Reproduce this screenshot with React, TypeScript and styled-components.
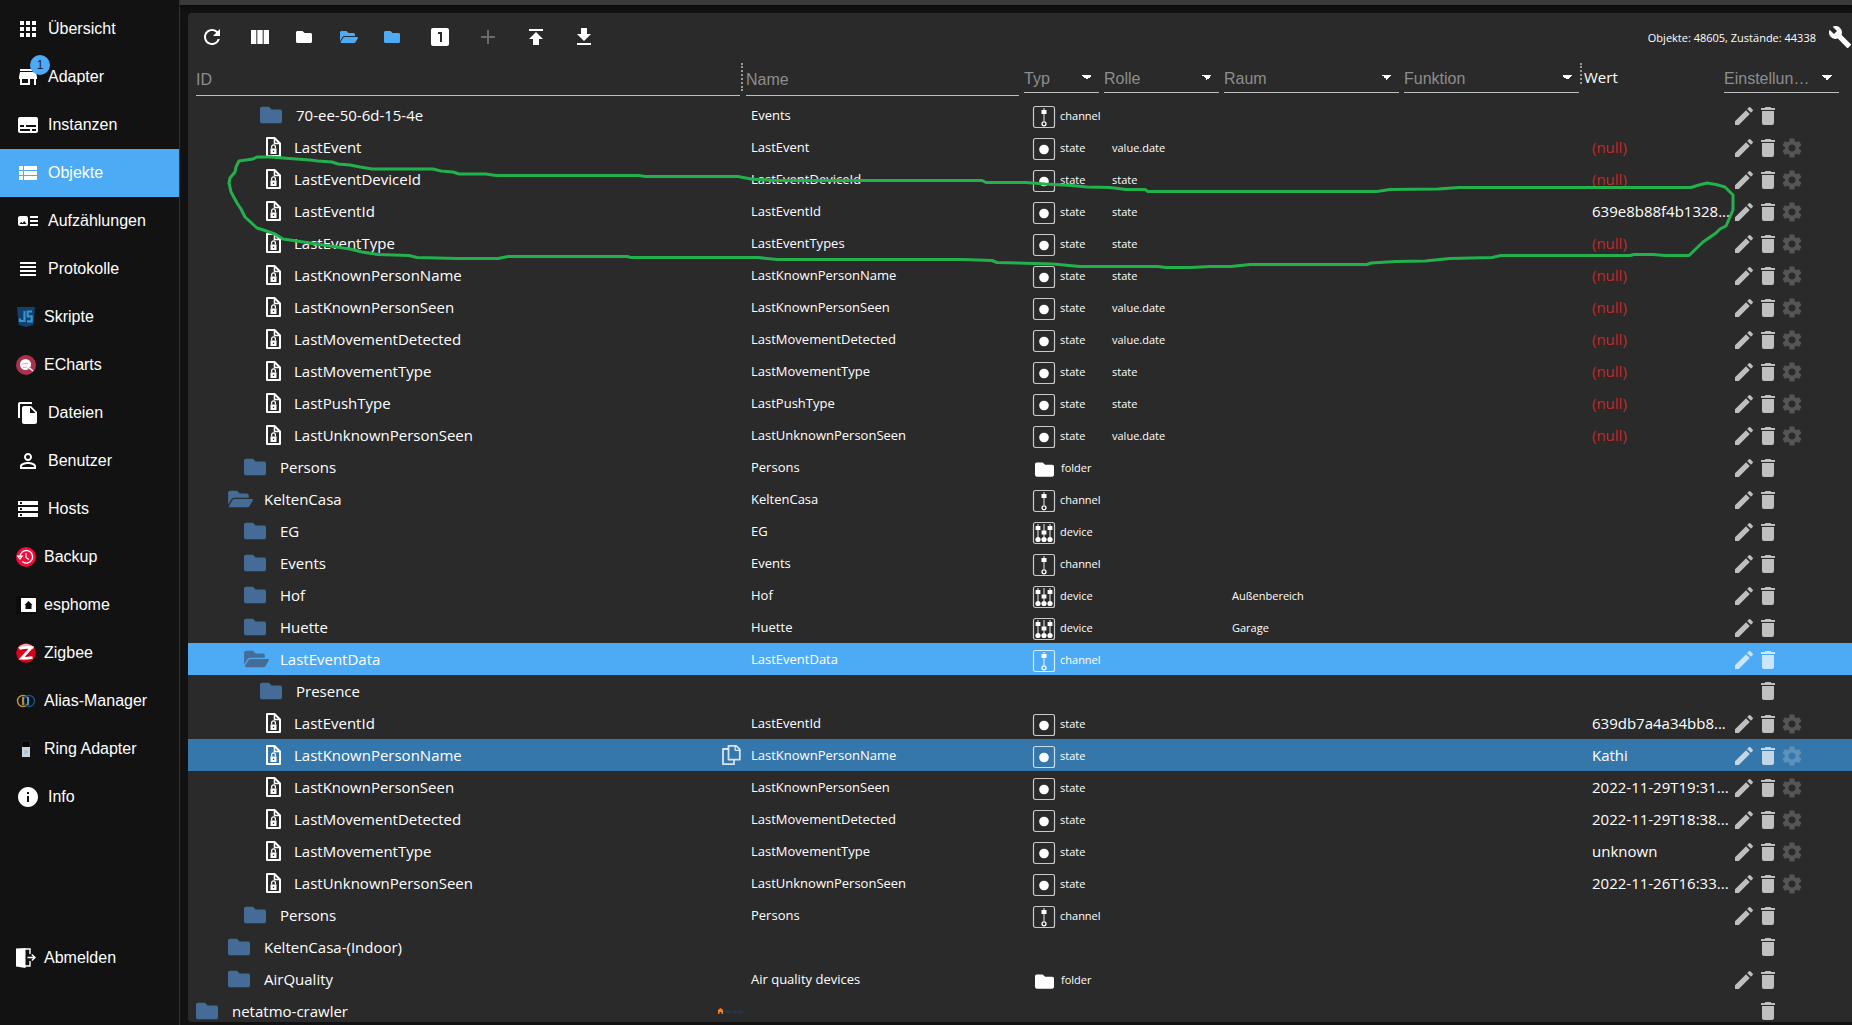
import React from "react";
import styled, { createGlobalStyle, css } from "styled-components";
import {
  MdApps, MdStore, MdSubtitles, MdViewList, MdArtTrack, MdViewHeadline, MdFileCopy,
  MdPersonOutline, MdStorage, MdInfo, MdRefresh, MdViewColumn, MdLooksOne, MdAdd,
  MdPublish, MdGetApp, MdBuild, MdEdit, MdDelete, MdSettings,
} from "react-icons/md";
import { FaFolder, FaFolderOpen } from "react-icons/fa";

const color = {
  page: "#121212",
  panel: "#2a2a2a",
  bar: "#3a3a3a",
  line: "#333333",
  accent: "#4dabf5",
  hover: "#3577ab",
  folder: "#456c97",
  label: "#8d8d8d",
  rule: "#bfbfbf",
  error: "#c62828",
  mark: "#22b14c",
};

const sans = `"Liberation Sans", Arial, sans-serif`;
const body = `"Open Sans", "Segoe UI", sans-serif`;

const Global = createGlobalStyle`
  * { box-sizing: border-box; }
  body { margin: 0; background: ${color.page}; color: #fff; font-family: ${body}; overflow: hidden; }
  button { border: 0; background: none; color: inherit; padding: 0; font: inherit; cursor: pointer; }
`;

const Page = styled.div`
  position: relative;
  display: flex;
  height: 100vh;
  overflow: hidden;
`;

/* ---------- side menu ---------- */

const Menu = styled.nav`
  display: flex;
  flex-direction: column;
  flex: none;
  width: 180px;
  padding: 5px 0 43px;
  border-right: 1px solid ${color.line};
  font-family: ${sans};
`;

const MenuLink = styled.a<{ $active?: boolean; $last?: boolean }>`
  display: flex;
  align-items: center;
  gap: 8px;
  flex: none;
  height: 48px;
  padding-left: 16px;
  font-size: 16px;
  line-height: 24px;
  color: #fff;
  text-decoration: none;
  background: ${(p) => (p.$active ? color.accent : "transparent")};
  margin-top: ${(p) => (p.$last ? "auto" : "0")};
`;

const MenuIcon = styled.span`
  position: relative;
  display: flex;
  font-size: 24px;
`;

const Badge = styled.span`
  position: absolute;
  top: -10px;
  right: -10px;
  width: 20px;
  height: 20px;
  border-radius: 10px;
  background: ${color.accent};
  color: #222;
  font-size: 12px;
  line-height: 20px;
  text-align: center;
`;

/* ---------- main panel ---------- */

const Main = styled.main`
  display: flex;
  flex-direction: column;
  flex: 1;
  min-width: 0;
`;

const TopBar = styled.div`
  flex: none;
  height: 5px;
  background: ${color.bar};
  box-shadow: 0 2px 4px rgba(0, 0, 0, 0.5);
`;

const Panel = styled.section`
  display: flex;
  flex-direction: column;
  flex: 1;
  min-height: 0;
  margin: 8px 0 3px 8px;
  border-radius: 4px 0 0 4px;
  background: ${color.panel};
  overflow: hidden;
`;

const Toolbar = styled.div`
  display: flex;
  align-items: center;
  flex: none;
  height: 48px;
`;

const ToolButton = styled.button<{ $folder?: boolean; $tint?: boolean }>`
  display: flex;
  align-items: center;
  width: ${(p) => (p.$folder ? 44 : 48)}px;
  height: 48px;
  padding-left: 12px;
  font-size: ${(p) => (p.$folder ? 16 : 24)}px;
  color: ${(p) => (p.$tint ? color.accent : "#fff")};
  &:disabled { color: rgba(255, 255, 255, 0.3); }
`;

const EdgeButton = styled(ToolButton)`
  width: 36px;
`;

const Summary = styled.span`
  margin-left: auto;
  padding-top: 2px;
  font-size: 11px;
  line-height: 16px;
`;

const OpenFolder = styled(FaFolderOpen)`
  width: 18px;
`;

const Table = styled.table`
  width: 100%;
  table-layout: fixed;
  border-collapse: collapse;
`;

const Col = styled.col<{ $w?: number }>`
  width: ${(p) => (p.$w ? `${p.$w}px` : "auto")};
`;

const HeadCell = styled.th<{ $left?: number; $right?: number }>`
  height: 38px;
  padding: 2px ${(p) => p.$right ?? 5}px 0 ${(p) => p.$left ?? 0}px;
  text-align: left;
  vertical-align: top;
  font-weight: 400;
`;

const HeadRow = styled.div`
  display: flex;
  align-items: flex-start;
  gap: 1px;
`;

const field = css`
  flex: 1;
  width: 100%;
  min-width: 0;
  padding: 2px 0 0;
  border: 0;
  border-bottom: 1px solid ${color.rule};
  border-radius: 0;
  outline: 0;
  background-color: transparent;
  font-family: ${sans};
  font-size: 16px;
  color: ${color.label};
`;

const Filter = styled.input`
  ${field}
  height: 33px;
  &::placeholder { color: ${color.label}; opacity: 1; }
`;

const Picker = styled.select`
  ${field}
  appearance: none;
  height: 30px;
  padding-right: 24px;
  text-overflow: ellipsis;
  overflow: hidden;
  white-space: nowrap;
  background-image: linear-gradient(to bottom right, #fff 50%, transparent 50%),
    linear-gradient(to bottom left, #fff 50%, transparent 50%);
  background-size: 5px 5px, 5px 5px;
  background-position: right 7px top 12px, right 12px top 12px;
  background-repeat: no-repeat;
  option { color: #000; }
`;

const Grip = styled.span<{ $tall?: boolean }>`
  width: 2px;
  height: ${(p) => (p.$tall ? 28 : 21)}px;
  border-left: 2px dotted #9a9a9a;
`;

const ValueHead = styled.span`
  display: block;
  font-size: 15px;
  line-height: 28px;
`;

const Row = styled.tr<{ $tone?: Tone }>`
  background: ${(p) => (p.$tone === "selected" ? color.accent : p.$tone === "hover" ? color.hover : "transparent")};
`;

const Cell = styled.td<{ $size?: number; $null?: boolean }>`
  height: 32px;
  padding: 0 0 0 8px;
  font-size: ${(p) => p.$size ?? 11}px;
  line-height: 20px;
  color: ${(p) => (p.$null ? color.error : "#fff")};
  white-space: nowrap;
`;

const SmallCell = styled(Cell)`
  padding-top: 2px;
`;

const IdBox = styled.div<{ $level: number }>`
  display: flex;
  align-items: center;
  height: 32px;
  padding-left: ${(p) => p.$level * 16}px;
`;

const TreeIcon = styled.span<{ $leaf: boolean }>`
  display: flex;
  flex: none;
  width: ${(p) => (p.$leaf ? 34 : 36)}px;
  font-size: 22px;
  color: ${(p) => (p.$leaf ? "#fff" : color.folder)};
`;

const TreeOpen = styled(FaFolderOpen)`
  width: 25px;
`;

const IdEnd = styled.span`
  display: flex;
  margin-left: auto;
`;

const TypeBox = styled.div`
  display: flex;
  align-items: center;
  gap: 4px;
  height: 30px;
  svg { flex: none; margin-top: 2px; }
`;

const TypeFolder = styled(FaFolder)`
  width: 19px;
  height: 19px;
  margin: 0 3px;
`;

const Actions = styled.div<{ $alone?: boolean }>`
  display: flex;
  justify-content: flex-start;
  align-items: center;
  height: 32px;
  padding-left: ${(p) => (p.$alone ? 24 : 0)}px;
  padding-top: ${(p) => (p.$alone ? 0 : 2)}px;
`;

const ActionButton = styled.button<{ $faint?: boolean }>`
  display: flex;
  width: 24px;
  height: 24px;
  font-size: 24px;
  color: #fff;
  opacity: ${(p) => (p.$faint ? 0.2 : 0.7)};
`;

const Marking = styled.svg`
  position: absolute;
  left: 0;
  top: 0;
  width: 1852px;
  height: 300px;
  pointer-events: none;
`;

/* ---------- drawings ---------- */

const JsIcon = () => (
  <svg width="20" height="20" viewBox="0 0 20 20">
    <path d="M1 0h18l-1.6 18L10 20l-7.400-2z" fill="#12406f" />
    <path d="M8.500 4v10H4v-2.500M16 4.500h-4.300v4.800h4v5H11" fill="none" stroke="#3593cf" strokeWidth="2.200" />
  </svg>
);

const EChartsIcon = () => (
  <svg width="20" height="20" viewBox="0 0 20 20">
    <circle cx="10" cy="10" r="10" fill="#ab3150" />
    <circle cx="9.500" cy="9.500" r="5.500" fill="#fff" />
    <path d="M13 12.500l4 3.500M6 8.500c2-1.500 5-1.500 7 0M6 11c2 .5 3 .5 5 0" stroke="#fff" strokeWidth="1.500" fill="none" />
    <path d="M5.500 9.500c2.500-1 4-1.500 7-1M7 12.500l4-.5M11 14.500l3-2.500" stroke="#d58a9c" strokeWidth=".8" fill="none" />
  </svg>
);

const BackupIcon = () => (
  <svg width="20" height="20" viewBox="0 0 20 20">
    <circle cx="10" cy="10" r="10" fill="#f40b3e" />
    <path d="M4 10a6.300 6.300 0 1 1 2.200 4.600" fill="none" stroke="#fff" strokeWidth="1.300" />
    <path d="M1.800 9.200h4.400L4 12zM10 6v4.500l3 2" fill="none" stroke="#fff" strokeWidth="1.200" />
  </svg>
);

const EspIcon = () => (
  <svg width="20" height="20" viewBox="0 0 20 20">
    <path d="M0 1h20v18H0z" fill="#0c0c0c" />
    <path d="M5 3h15v14H5z" fill="#fff" />
    <path d="M12.500 6l4 4H15.500v4h-6v-4H8.500z" fill="#0a0a0a" />
  </svg>
);

const ZigbeeIcon = () => (
  <svg width="20" height="20" viewBox="0 0 20 20">
    <circle cx="10" cy="10" r="9.800" fill="#d4021d" />
    <path d="M2 4.500Q10-3 18 4.500L17 6Q10 3 3 6z" fill="#f3a9a4" />
    <path d="M3.500 5.500Q9 4 15.500 4.500L5.500 15.300Q11 15.500 16.500 14.500" fill="none" stroke="#fff" strokeWidth="2.600" />
  </svg>
);

const AliasIcon = () => (
  <svg width="20" height="20" viewBox="0 0 20 20">
    <circle cx="7" cy="10" r="5.500" fill="none" stroke="#c59a3c" strokeWidth="1.400" />
    <circle cx="13" cy="10" r="5.500" fill="none" stroke="#1d5183" strokeWidth="1.400" />
    <path d="M7 6v8" stroke="#c59a3c" strokeWidth="1.800" />
    <path d="M12 6v8" stroke="#3f9fd6" strokeWidth="1.800" />
  </svg>
);

const RingIcon = () => (
  <svg width="20" height="20" viewBox="0 0 20 20">
    <path d="M6 2h8v8H6z" fill="#050505" stroke="#333" strokeWidth=".6" />
    <path d="M6 8h8v10H6z" fill="#cfd4d8" />
    <circle cx="10" cy="13" r="2" fill="#9cc8e4" />
  </svg>
);

const LogoutIcon = () => (
  <svg width="20" height="20" viewBox="0 0 20 20">
    <path d="M0 0.500L9.500 0v20L0 18.500z" fill="#fff" />
    <path d="M9 1h5v5M14 13v5H9" fill="none" stroke="#fff" strokeWidth="1.400" />
    <path d="M11.500 9.500h7M15.800 6.500l3.200 3-3.200 3" fill="none" stroke="#fff" strokeWidth="1.500" />
  </svg>
);

const StateFileIcon = () => (
  <svg width="24" height="24" viewBox="0 0 24 24" fill="none">
    <path d="M7 3h7.500L20 8.500V21H7z" stroke="#fff" strokeWidth="2" strokeLinejoin="round" />
    <path d="M14.500 3v5.500H20" stroke="#fff" strokeWidth="1.600" />
    <path d="M10.500 13.500h6V19h-6z" fill="#fff" />
    <path d="M11.600 13.500v-1.700a1.900 1.900 0 0 1 3.800 0v1.700" stroke="#fff" strokeWidth="1.200" />
    <circle cx="13.500" cy="16.200" r=".8" fill={color.panel} />
  </svg>
);

const CopyIcon = () => (
  <svg width="24" height="24" viewBox="0 0 24 24" fill="none" stroke="#fff" strokeOpacity=".8" strokeWidth="1.800" strokeLinejoin="round">
    <path d="M9.500 2.800h7.700l3.600 3.600v10.200H9.500z" />
    <path d="M16.200 3v4.300h4.400" strokeWidth="1.300" />
    <path d="M9 6H4v15.200h11v-4" />
  </svg>
);

const NetatmoLogo = () => (
  <svg width="25" height="8" viewBox="0 0 25 8">
    <path d="M0 7V3L2.500 1 5 3v4H3.500V5h-2v2z" fill="#f58220" />
    <path d="M6 6V4h2v2M9.500 4h2v2h-2zM13 3.500V6h1.500M16 4h2v2h-2zM19.500 6V4h2v2M23 4h1.500v2H23z" fill="none" stroke="#1d3a5f" strokeWidth=".9" />
  </svg>
);

const Frame = () => <rect x="1.500" y="1.500" width="21" height="21" rx="2" fill="none" stroke="#fff" strokeOpacity=".75" strokeWidth="1.200" />;

const StateIcon = () => (
  <svg width="24" height="24" viewBox="0 0 24 24">
    <Frame />
    <circle cx="12" cy="12.500" r="4.800" fill="#fff" />
  </svg>
);

const ChannelIcon = () => (
  <svg width="24" height="24" viewBox="0 0 24 24">
    <Frame />
    <path d="M12 3v13" stroke="#fff" strokeOpacity=".6" strokeWidth="1.500" />
    <path d="M9.500 5h5v4h-5z" fill="#fff" />
    <circle cx="12" cy="18.800" r="2" fill="none" stroke="#fff" strokeWidth="1.300" />
  </svg>
);

const DeviceIcon = () => (
  <svg width="24" height="24" viewBox="0 0 24 24">
    <Frame />
    <path d="M6 3v13M12 3v13M18 3v13" stroke="#fff" strokeOpacity=".6" strokeWidth="1.500" />
    <path d="M3.600 5h4.800v4H3.600zM9.600 9.500h4.800v4H9.600zM15.600 5h4.800v4h-4.800z" fill="#fff" />
    <circle cx="6" cy="18.500" r="2.600" fill="#fff" />
    <circle cx="12" cy="18.500" r="2.600" fill="#fff" />
    <circle cx="18" cy="18.500" r="2.600" fill="#fff" />
  </svg>
);

/* ---------- data ---------- */

type Tone = "selected" | "hover";
type Kind = "state" | "channel" | "device" | "folder";
type Item = {
  id: string;
  level: number;
  icon?: "leaf" | "open" | "closed";
  name?: string;
  kind?: Kind;
  role?: string;
  room?: string;
  value?: string;
  tone?: Tone;
  readonly?: boolean;
  end?: React.ReactNode;
};

const leaf = (id: string, value: string, role?: string, more?: Partial<Item>): Item => ({
  id, level: 4, icon: "leaf", name: id, kind: "state", role, value, ...more,
});

const items: Item[] = [
  { id: "70-ee-50-6d-15-4e", level: 4, name: "Events", kind: "channel" },
  leaf("LastEvent", "(null)", "value.date"),
  leaf("LastEventDeviceId", "(null)", "state"),
  leaf("LastEventId", "639e8b88f4b1328...", "state"),
  leaf("LastEventType", "(null)", "state", { name: "LastEventTypes" }),
  leaf("LastKnownPersonName", "(null)", "state"),
  leaf("LastKnownPersonSeen", "(null)", "value.date"),
  leaf("LastMovementDetected", "(null)", "value.date"),
  leaf("LastMovementType", "(null)", "state"),
  leaf("LastPushType", "(null)", "state"),
  leaf("LastUnknownPersonSeen", "(null)", "value.date"),
  { id: "Persons", level: 3, name: "Persons", kind: "folder" },
  { id: "KeltenCasa", level: 2, icon: "open", name: "KeltenCasa", kind: "channel" },
  { id: "EG", level: 3, name: "EG", kind: "device" },
  { id: "Events", level: 3, name: "Events", kind: "channel" },
  { id: "Hof", level: 3, name: "Hof", kind: "device", room: "Außenbereich" },
  { id: "Huette", level: 3, name: "Huette", kind: "device", room: "Garage" },
  { id: "LastEventData", level: 3, icon: "open", name: "LastEventData", kind: "channel", tone: "selected" },
  { id: "Presence", level: 4, readonly: true },
  leaf("LastEventId", "639db7a4a34bb8..."),
  leaf("LastKnownPersonName", "Kathi", undefined, { tone: "hover", end: <CopyIcon /> }),
  leaf("LastKnownPersonSeen", "2022-11-29T19:31..."),
  leaf("LastMovementDetected", "2022-11-29T18:38..."),
  leaf("LastMovementType", "unknown"),
  leaf("LastUnknownPersonSeen", "2022-11-26T16:33..."),
  { id: "Persons", level: 3, name: "Persons", kind: "channel" },
  { id: "KeltenCasa-(Indoor)", level: 2, readonly: true },
  { id: "AirQuality", level: 2, name: "Air quality devices", kind: "folder" },
  { id: "netatmo-crawler", level: 0, readonly: true, end: <NetatmoLogo /> },
];

const menu: { label: string; icon: React.ReactNode; active?: boolean; badge?: string }[] = [
  { label: "Übersicht", icon: <MdApps /> },
  { label: "Adapter", icon: <MdStore />, badge: "1" },
  { label: "Instanzen", icon: <MdSubtitles /> },
  { label: "Objekte", icon: <MdViewList />, active: true },
  { label: "Aufzählungen", icon: <MdArtTrack /> },
  { label: "Protokolle", icon: <MdViewHeadline /> },
  { label: "Skripte", icon: <JsIcon /> },
  { label: "ECharts", icon: <EChartsIcon /> },
  { label: "Dateien", icon: <MdFileCopy /> },
  { label: "Benutzer", icon: <MdPersonOutline /> },
  { label: "Hosts", icon: <MdStorage /> },
  { label: "Backup", icon: <BackupIcon /> },
  { label: "esphome", icon: <EspIcon /> },
  { label: "Zigbee", icon: <ZigbeeIcon /> },
  { label: "Alias-Manager", icon: <AliasIcon /> },
  { label: "Ring Adapter", icon: <RingIcon /> },
  { label: "Info", icon: <MdInfo /> },
];

const typeIcons: Record<Kind, React.ReactNode> = {
  state: <StateIcon />,
  channel: <ChannelIcon />,
  device: <DeviceIcon />,
  folder: <TypeFolder />,
};

const outline =
  "M239 161L253 159L257 157L271 157L283 158L310 160L318 161L332 162L338 164L350 165L360 167L372 169L433 169L441 171L453 172L459 174L486 174L496 175.500L639 175.500L645 176.500L738 176.500L751 179L777 180.500L982 180.500L986 182.500L1026 182.500L1045 184L1072 185.500L1087 187L1110 187.500L1126 189.500L1145 189.500L1148 191.500L1377 191.500L1390 189.500L1438 189L1459 187.500L1691 187.500L1699 185L1707 183L1716 184.500L1725 187L1733 195L1733 210L1726 226L1720 229L1716 233L1703 242L1689 255.500L1665 255.500L1653 254.500L1634 254.500L1630 255.500L1501 255.500L1492 257.500L1450 258.500L1425 261L1396 261.500L1371 263L1367 264.500L1250 264.500L1231 266.500L1210 266.500L1191 267.500L1166 267.500L1158 266.500L1080 266.500L1053 264L997 262.500L992 260.500L963 259.500L777 259.500L758 257.500L631 257.500L627 256.500L508 256.500L498 258.500L457 258.500L417 257.500L409 255.500L378 254.500L362 252L350 249L330 246L283 239L275 234L265 230.500L257 228L245 217L241 209L237 203L231 192L229 183L230 178L235 172L236 167Z";

function Pick({ label }: { label: string }) {
  return (
    <Picker aria-label={label} defaultValue="">
      <option value="">{label}</option>
    </Picker>
  );
}

function ObjectRow({ item }: { item: Item }) {
  const isLeaf = item.icon === "leaf";
  return (
    <Row $tone={item.tone}>
      <Cell $size={15}>
        <IdBox $level={item.level}>
          <TreeIcon $leaf={isLeaf}>
            {isLeaf ? <StateFileIcon /> : item.icon === "open" ? <TreeOpen /> : <FaFolder />}
          </TreeIcon>
          {item.id}
          {item.end && <IdEnd>{item.end}</IdEnd>}
        </IdBox>
      </Cell>
      <Cell $size={13}>{item.name}</Cell>
      <SmallCell>
        {item.kind && (
          <TypeBox>
            {typeIcons[item.kind]}
            {item.kind}
          </TypeBox>
        )}
      </SmallCell>
      <SmallCell>{item.role}</SmallCell>
      <SmallCell>{item.room}</SmallCell>
      <SmallCell />
      <Cell $size={15} $null={item.value === "(null)"}>{item.value}</Cell>
      <Cell>
        <Actions $alone={item.readonly}>
          {!item.readonly && (
            <ActionButton aria-label="Bearbeiten"><MdEdit /></ActionButton>
          )}
          <ActionButton aria-label="Löschen"><MdDelete /></ActionButton>
          {isLeaf && (
            <ActionButton $faint aria-label="Einstellungen"><MdSettings /></ActionButton>
          )}
        </Actions>
      </Cell>
    </Row>
  );
}

export default function App() {
  return (
    <Page>
      <Global />
      <Menu>
        {menu.map((m) => (
          <MenuLink key={m.label} href="#" $active={m.active}>
            <MenuIcon>
              {m.icon}
              {m.badge && <Badge>{m.badge}</Badge>}
            </MenuIcon>
            {m.label}
          </MenuLink>
        ))}
        <MenuLink href="#" $last>
          <MenuIcon><LogoutIcon /></MenuIcon>
          Abmelden
        </MenuLink>
      </Menu>
      <Main>
        <TopBar />
        <Panel>
          <Toolbar>
            <ToolButton aria-label="Aktualisieren"><MdRefresh /></ToolButton>
            <ToolButton aria-label="Spalten"><MdViewColumn /></ToolButton>
            <ToolButton $folder aria-label="Alle schließen"><FaFolder /></ToolButton>
            <ToolButton $folder $tint aria-label="Alle öffnen"><OpenFolder /></ToolButton>
            <ToolButton $folder $tint aria-label="Ebene schließen"><FaFolder /></ToolButton>
            <ToolButton aria-label="Zustände"><MdLooksOne /></ToolButton>
            <ToolButton aria-label="Hinzufügen" disabled><MdAdd /></ToolButton>
            <ToolButton aria-label="Hochladen"><MdPublish /></ToolButton>
            <ToolButton aria-label="Herunterladen"><MdGetApp /></ToolButton>
            <Summary>Objekte: 48605, Zustände: 44338</Summary>
            <EdgeButton aria-label="Werkzeuge"><MdBuild /></EdgeButton>
          </Toolbar>
          <Table>
            <colgroup>
              <Col />
              <Col $w={281} />
              <Col $w={80} />
              <Col $w={120} />
              <Col $w={180} />
              <Col $w={180} />
              <Col $w={140} />
              <Col $w={128} />
            </colgroup>
            <thead>
              <tr>
                <HeadCell $left={8} $right={0}>
                  <HeadRow>
                    <Filter aria-label="ID" placeholder="ID" />
                    <Grip $tall />
                  </HeadRow>
                </HeadCell>
                <HeadCell $left={3}>
                  <Filter aria-label="Name" placeholder="Name" />
                </HeadCell>
                <HeadCell><Pick label="Typ" /></HeadCell>
                <HeadCell><Pick label="Rolle" /></HeadCell>
                <HeadCell><Pick label="Raum" /></HeadCell>
                <HeadCell $right={2}>
                  <HeadRow>
                    <Pick label="Funktion" />
                    <Grip />
                  </HeadRow>
                </HeadCell>
                <HeadCell><ValueHead>Wert</ValueHead></HeadCell>
                <HeadCell $right={13}><Pick label="Einstellungen" /></HeadCell>
              </tr>
            </thead>
            <tbody>
              {items.map((item, i) => (
                <ObjectRow key={i} item={item} />
              ))}
            </tbody>
          </Table>
        </Panel>
      </Main>
      <Marking viewBox="0 0 1852 300" fill="none" stroke={color.mark} strokeWidth="3" strokeLinejoin="round">
        <path d={outline} />
      </Marking>
    </Page>
  );
}
